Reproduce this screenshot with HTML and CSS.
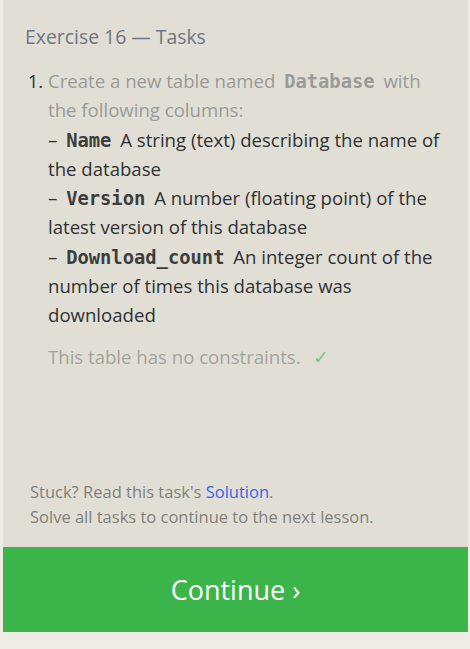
FILE: index.html
```html
<!DOCTYPE html>
<html>
<head>
<meta charset="utf-8">
<link rel="stylesheet" href="styles.css">
</head>
<body>
<div class="page">
  <section class="panel">
    <h2 class="title">Exercise 16 — Tasks</h2>
    <ol class="tasks">
      <li class="task">
        <span class="done">Create a new table named <code class="code-done">Database</code> with the following columns:</span><br>
        <span class="col">– <code>Name</code> A string (text) describing the name of the database</span><br>
        <span class="col">– <code>Version</code> A number (floating point) of the latest version of this database</span><br>
        <span class="col">– <code>Download_count</code> An integer count of the number of times this database was downloaded</span>
        <p class="note">This table has no constraints. <span class="check">✓</span></p>
      </li>
    </ol>
    <div class="help">
      <p>Stuck? Read this task's <a href="#" class="link">Solution</a>.</p>
      <p>Solve all tasks to continue to the next lesson.</p>
    </div>
  </section>
  <button class="continue">Continue ›</button>
</div>
</body>
</html>
```
FILE: styles.css
```css
html, body {
  margin: 0;
  padding: 0;
}
body {
  background: #efece5;
  font-family: "Open Sans", "Noto Sans", sans-serif;
}
.page {
  margin: 0 2px 0 3px;
  display: flex;
  flex-direction: column;
}
.panel {
  background: #e1dfd5;
  padding: 24px 16px 18px 22px;
  height: 547px;
  box-sizing: border-box;
  display: flex;
  flex-direction: column;
}
.title {
  margin: 0;
  font-size: 19.4px;
  font-weight: 400;
  color: #6f7583;
  line-height: 26px;
}
.tasks {
  margin: 16px 0 0 0;
  padding: 0 0 0 23px;
  color: #2f3136;
  font-size: 18.6px;
  line-height: 29.3px;
}
.task::marker {
  color: #2c3140;
}
.done {
  color: #9a9a98;
}
code {
  font-family: "DejaVu Sans Mono", "Liberation Mono", monospace;
  font-weight: 700;
  font-size: 18.8px;
  line-height: 1;
  padding: 0 4px;
  color: #3d3d3d;
}
.code-done {
  color: #9a9a98;
}
.note {
  margin: 12px 0 0 0;
  color: #a3a3a0;
}
.check {
  color: #7cc68b;
  margin-left: 8px;
}
.help {
  margin-top: auto;
  font-size: 16.5px;
  line-height: 25px;
  color: #80807c;
  padding-left: 5px;
}
.help p {
  margin: 0;
}
.link {
  color: #3566ea;
  text-decoration: none;
}
.continue {
  height: 85px;
  border: none;
  background: #3bb54a;
  color: #ffffff;
  font-family: "Open Sans", "Noto Sans", sans-serif;
  font-size: 27px;
  padding: 0;
  margin: 0;
}
```
